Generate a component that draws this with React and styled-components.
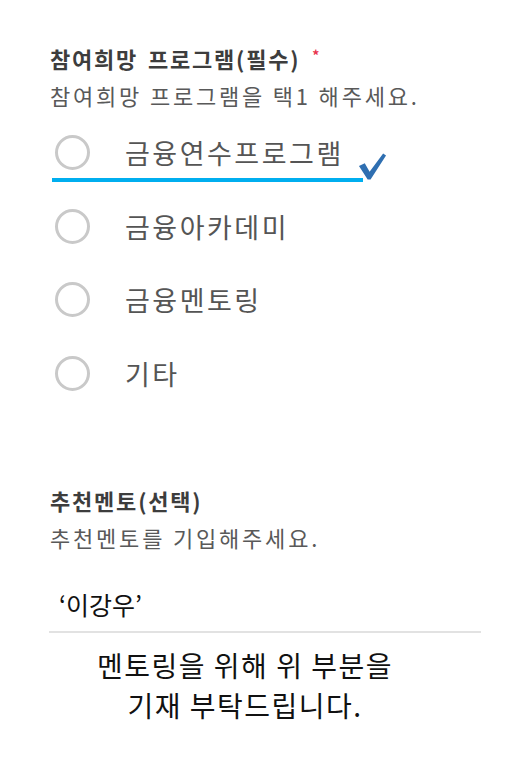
import React from "react";
import styled, { createGlobalStyle } from "styled-components";

const GlobalStyle = createGlobalStyle`
  body {
    margin: 0;
    background: #ffffff;
    font-family: "Noto Sans CJK KR", "Noto Sans", sans-serif;
  }
`;

const options = ["금융연수프로그램", "금융아카데미", "금융멘토링", "기타"];

function App() {
  return (
    <Page>
      <GlobalStyle />
      <Form>
        <Title>
          참여희망 프로그램(필수) <Required>*</Required>
        </Title>
        <Help>참여희망 프로그램을 택1 해주세요.</Help>
        <OptionList>
          {options.map((label, i) => (
            <OptionRow key={label}>
              <Radio />
              <OptionLabel>{label}</OptionLabel>
              {i === 0 && (
                <>
                  <Underline />
                  <Check viewBox="0 0 30 30">
                    <path d="M1 14 L7 11 L12 20 L26 1 L29 3 L13 28 L10 28 Z" fill="#2f6fb1" />
                  </Check>
                </>
              )}
            </OptionRow>
          ))}
        </OptionList>

        <Title $gap="74px">추천멘토(선택)</Title>
        <Help>추천멘토를 기입해주세요.</Help>
        <NameField>‘이강우’</NameField>
      </Form>
      <Note>
        멘토링을 위해 위 부분을
        <br />
        기재 부탁드립니다.
      </Note>
    </Page>
  );
}

const Page = styled.div`
  width: 510px;
  min-height: 757px;
  padding-top: 42px;
  box-sizing: border-box;
`;

const Form = styled.div`
  padding-left: 50px;
  display: flex;
  flex-direction: column;
  align-items: flex-start;
`;

const Title = styled.div`
  margin-top: ${(p) => p.$gap || "0"};
  height: 32px;
  line-height: 32px;
  font-size: 22px;
  font-weight: 700;
  color: #3d3d3d;
  letter-spacing: 1.8px;
  word-spacing: 3px;
  white-space: nowrap;
`;

const Required = styled.span`
  color: #e8344e;
  font-size: 14px;
  vertical-align: top;
  position: relative;
  top: -3px;
  margin-left: 2px;
`;

const Help = styled.div`
  margin-top: 5px;
  height: 32px;
  line-height: 32px;
  font-size: 22px;
  color: #595959;
  letter-spacing: 2.8px;
  white-space: nowrap;
`;

const OptionList = styled.div`
  margin-top: 5px;
  display: flex;
  flex-direction: column;
`;

const OptionRow = styled.div`
  position: relative;
  height: 73.5px;
  display: flex;
  align-items: center;
  padding-left: 5px;
`;

const Radio = styled.span`
  width: 29px;
  height: 29px;
  border: 3px solid #c9c9c9;
  border-radius: 50%;
`;

const OptionLabel = styled.span`
  margin-left: 35px;
  font-size: 27px;
  color: #555555;
  letter-spacing: 2.5px;
  white-space: nowrap;
`;

const Underline = styled.span`
  position: absolute;
  left: 2px;
  top: 62px;
  width: 311px;
  height: 4px;
  background: #00aeef;
`;

const Check = styled.svg`
  position: absolute;
  left: 308px;
  top: 36px;
  width: 29px;
  height: 30px;
`;

const NameField = styled.div`
  margin-top: 30px;
  margin-left: -1px;
  width: 432px;
  height: 50px;
  box-sizing: border-box;
  line-height: 42px;
  padding-left: 10px;
  border-bottom: 2px solid #e2e2e2;
  font-size: 25px;
  color: #111111;
`;

const Note = styled.div`
  margin-top: 12px;
  padding-right: 20px;
  text-align: center;
  font-size: 28px;
  line-height: 40px;
  letter-spacing: 1.5px;
  color: #111111;
`;

export default App;
